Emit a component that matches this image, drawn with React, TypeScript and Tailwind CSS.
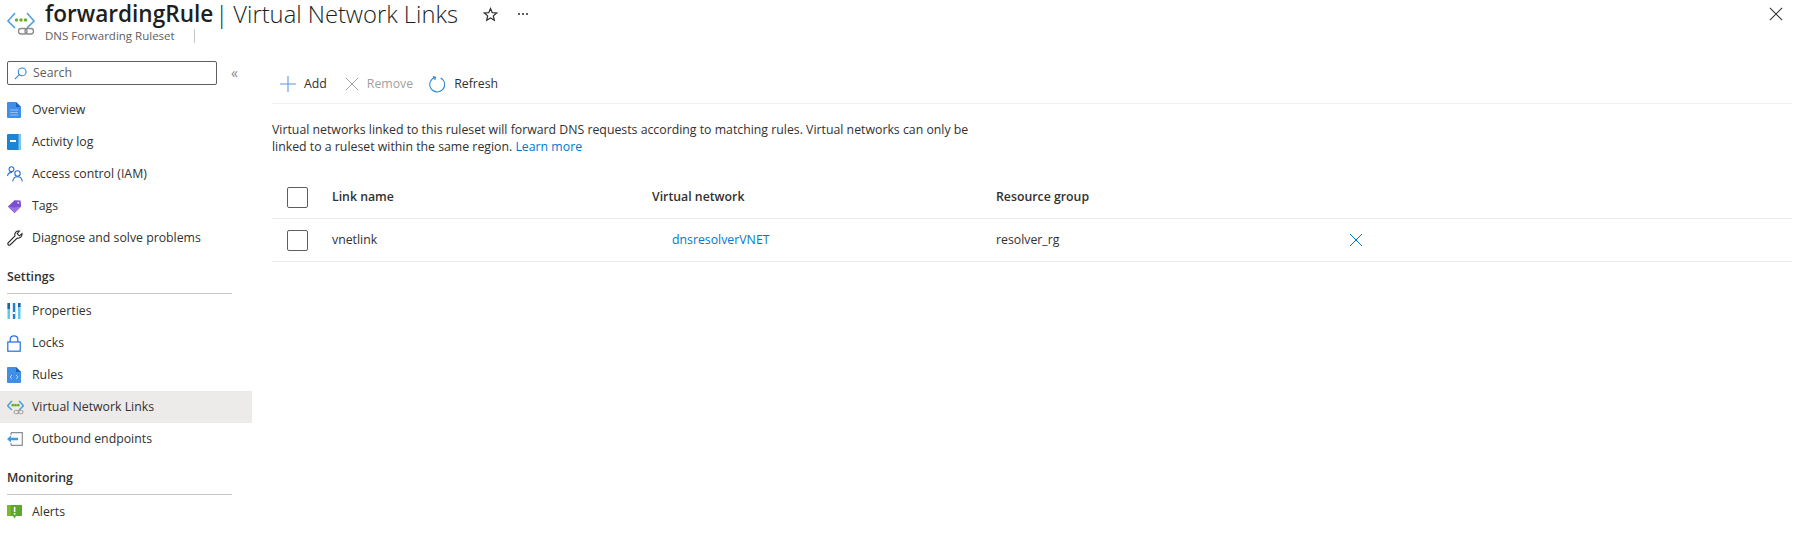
import type { ReactNode } from "react";

function LinkGlyph({ small }: { small?: boolean }) {
  const arrow = small ? "2.6" : "1.6";
  const dot = small ? 2.2 : 1.7;
  return (
    <svg viewBox="0 0 28 26" className={small ? "w-[17px] h-[16px]" : "w-[28px] h-[26px]"}>
      <path d="M8 3 L1 11 L8 18" fill="none" stroke="#50a0e0" strokeWidth={arrow} />
      <path d="M20 3 L27 11 L20 18" fill="none" stroke="#50a0e0" strokeWidth={arrow} />
      <circle cx="9.5" cy="10" r={dot} fill="#6bb024" />
      <circle cx="14" cy="10" r={dot} fill="#6bb024" />
      <circle cx="18.5" cy="10" r={dot} fill="#6bb024" />
      <rect x="11.5" y="18.5" width="8.5" height="5.5" rx="2.7" fill="none" stroke="#8a8a8a" strokeWidth="1.3" />
      <rect x="18" y="18.5" width="8.5" height="5.5" rx="2.7" fill="none" stroke="#8a8a8a" strokeWidth="1.3" />
    </svg>
  );
}

function DocIcon({ code }: { code?: boolean }) {
  return (
    <svg viewBox="0 0 14 16" className="w-[14px] h-[16px]">
      <path d="M0 1 a1 1 0 0 1 1-1 H9 L14 5 V15 a1 1 0 0 1-1 1 H1 a1 1 0 0 1-1-1 Z" fill="#3f8ee8" />
      <path d="M9 0 L14 5 H9 Z" fill="#1b62c4" />
      {code ? (
        <path d="M5 8 L3 10 L5 12 M9 8 L11 10 L9 12" fill="none" stroke="#cfe3fa" strokeWidth="0.8" />
      ) : (
        <path d="M3 8 H11 M3 10.5 H11 M3 13 H11" stroke="#8fc0f5" strokeWidth="1" />
      )}
    </svg>
  );
}

function ActivityIcon() {
  return (
    <svg viewBox="0 0 14 16" className="w-[14px] h-[16px]">
      <rect width="14" height="16" rx="1" fill="#1d84d2" />
      <rect x="11.5" width="2.5" height="16" fill="#7cc4f0" />
      <rect x="3" y="6" width="6" height="2" fill="#fff" />
    </svg>
  );
}

function AccessIcon() {
  return (
    <svg viewBox="0 0 16 16" className="w-[16px] h-[16px]" fill="none" stroke="#2b6fd6" strokeWidth="1.1">
      <circle cx="4.5" cy="3.2" r="2.4" />
      <path d="M0.6 10 C0.8 7.5 2.5 6.4 5 6.4" />
      <circle cx="10.5" cy="7.5" r="2.7" />
      <path d="M5.8 15.5 C6 12.2 8 10.8 10.5 10.8 C13 10.8 15 12.2 15.3 15.5" />
    </svg>
  );
}

function TagIcon() {
  return (
    <svg viewBox="0 0 16 16" className="w-[15px] h-[15px]">
      <path d="M1 8 L8 1.2 L14.5 1.5 Q15 7 15 8 L8 15 Z" fill="#7a4fd0" />
      <path d="M8 15 L1 8 L8 9 L15 8 Z" fill="#9a72e4" />
      <circle cx="12" cy="4" r="1" fill="#e8dcfa" />
    </svg>
  );
}

function WrenchIcon() {
  return (
    <svg viewBox="0 0 16 16" className="w-[16px] h-[16px]" fill="none" stroke="#2a2a2a" strokeWidth="1.1">
      <path d="M1 13 L8 5.8 C7.2 3 9.4 0.6 12.4 1 L10.2 3.6 L12.4 5.8 L15 3.5 C15.4 6.6 13 8.8 10.2 8 L3 15 C2 15.8 0.2 14.2 1 13 Z" />
    </svg>
  );
}

function PropertiesIcon() {
  return (
    <svg viewBox="0 0 14 16" className="w-[14px] h-[16px]">
      <rect x="0.5" width="2.5" height="16" fill="#5ec8f2" />
      <rect x="0.5" width="2.5" height="6" fill="#1c5fb5" />
      <rect x="5.8" width="2.5" height="16" fill="#1d84d2" />
      <rect x="5.8" y="9" width="2.5" height="2" fill="#fff" />
      <rect x="11" width="2.5" height="16" fill="#5ec8f2" />
      <rect x="11" width="2.5" height="4" fill="#1c5fb5" />
    </svg>
  );
}

function LockIcon() {
  return (
    <svg viewBox="0 0 14 17" className="w-[14px] h-[17px]" fill="none" stroke="#1f6fe0" strokeWidth="1.2">
      <rect x="0.8" y="7" width="12.4" height="9.2" />
      <path d="M3.2 7 V4.4 C3.2 2.2 4.8 0.8 7 0.8 C9.2 0.8 10.8 2.2 10.8 4.4 V7" />
    </svg>
  );
}

function OutboundIcon() {
  return (
    <svg viewBox="0 0 16 14" className="w-[16px] h-[14px]">
      <path d="M4 0.7 H15.3 V13.3 H4 M4 0.7 V3 M4 11 V13.3" fill="none" stroke="#8a8f94" strokeWidth="1.2" />
      <path d="M0 7 L4 3.5 V5.8 H11 V8.2 H4 V10.5 Z" fill="#3d9be0" />
    </svg>
  );
}

function AlertIcon() {
  return (
    <svg viewBox="0 0 15 14" className="w-[15px] h-[14px]">
      <path d="M0 0 H15 V11 H9 L7.5 13.5 L6 11 H0 Z" fill="#5ea72e" />
      <rect x="0" width="4" height="11" fill="#7cb82f" />
      <rect x="6.8" y="2" width="1.6" height="5" fill="#fff" />
      <rect x="6.8" y="8" width="1.6" height="1.6" fill="#fff" />
    </svg>
  );
}

function NavItem({ icon, label, active }: { icon: ReactNode; label: string; active?: boolean }) {
  return (
    <div className={`flex h-[32px] items-center pl-[7px] ${active ? "bg-[#edebe9]" : ""}`}>
      <div className="flex w-[25px] shrink-0 items-center">{icon}</div>
      <span className="text-[12.3px] text-[#323130]">{label}</span>
    </div>
  );
}

function SectionTitle({ label }: { label: string }) {
  return (
    <div className="mb-px ml-[7px] mr-[20px] flex h-[40px] items-center border-b border-[#c8c6c4] pt-[7px] text-[12.3px] font-semibold text-[#323130]">
      {label}
    </div>
  );
}

function Checkbox() {
  return <div className="h-[21px] w-[21px] rounded-[2px] border border-[#605e5c] bg-white" />;
}

export default function App() {
  return (
    <div className="relative h-[554px] w-[1808px] overflow-hidden bg-white font-['Open_Sans','Noto_Sans',sans-serif]">
      <header className="flex h-[50px] pl-[7px]">
        <div className="mt-[10px] w-[38px] shrink-0">
          <LinkGlyph />
        </div>
        <div>
          <div className="flex items-center">
            <h1 className="flex items-center leading-[28px] text-[#201f1e]">
              <span className="text-[22.6px] font-semibold">forwardingRule</span>
              <span className="w-[20px] pr-[3px] text-center text-[24px] font-light">|</span>
              <span className="text-[23.75px] font-light">Virtual Network Links</span>
            </h1>
            <svg viewBox="0 0 24 24" className="ml-[25px] h-[15px] w-[15px]" fill="none" stroke="#323130" strokeWidth="2">
              <path d="M12 2.5 L14.8 9 L21.8 9.6 L16.5 14.2 L18.1 21.2 L12 17.5 L5.9 21.2 L7.5 14.2 L2.2 9.6 L9.2 9 Z" />
            </svg>
            <div className="ml-[20px] flex gap-[2px]">
              <span className="h-[2px] w-[2px] bg-[#605e5c]" />
              <span className="h-[2px] w-[2px] bg-[#605e5c]" />
              <span className="h-[2px] w-[2px] bg-[#605e5c]" />
            </div>
          </div>
          <div className="flex items-center">
            <span className="text-[11.5px] leading-[16px] text-[#605e5c]">DNS Forwarding Ruleset</span>
            <span className="ml-[19px] h-[14px] w-px bg-[#c8c6c4]" />
          </div>
        </div>
      </header>
      <svg viewBox="0 0 16 16" className="absolute right-[25px] top-[7px] h-[14px] w-[14px]" fill="none" stroke="#323130" strokeWidth="1.2">
        <path d="M1 1 L15 15 M15 1 L1 15" />
      </svg>

      <div className="flex">
        <aside className="w-[252px] shrink-0 pt-[11px]">
          <div className="flex items-center pb-[9px]">
            <div className="ml-[7px] flex h-[24px] w-[210px] items-center rounded-[2px] border border-[#605e5c] pl-[6px]">
              <svg viewBox="0 0 16 16" className="h-[13px] w-[13px]" fill="none" stroke="#2b88d8" strokeWidth="1.3">
                <circle cx="10" cy="6" r="4.8" />
                <path d="M6.5 9.5 L1 15" />
              </svg>
              <span className="ml-[6px] text-[12.3px] text-[#605e5c]">Search</span>
            </div>
            <span className="ml-[14px] text-[14px] leading-none text-[#8a8886]">«</span>
          </div>
          <NavItem icon={<DocIcon />} label="Overview" />
          <NavItem icon={<ActivityIcon />} label="Activity log" />
          <NavItem icon={<AccessIcon />} label="Access control (IAM)" />
          <NavItem icon={<TagIcon />} label="Tags" />
          <NavItem icon={<WrenchIcon />} label="Diagnose and solve problems" />
          <SectionTitle label="Settings" />
          <NavItem icon={<PropertiesIcon />} label="Properties" />
          <NavItem icon={<LockIcon />} label="Locks" />
          <NavItem icon={<DocIcon code />} label="Rules" />
          <NavItem icon={<LinkGlyph small />} label="Virtual Network Links" active />
          <NavItem icon={<OutboundIcon />} label="Outbound endpoints" />
          <SectionTitle label="Monitoring" />
          <NavItem icon={<AlertIcon />} label="Alerts" />
        </aside>

        <main className="ml-[20px] mr-[16px] flex-1 pt-[15px]">
          <div className="flex h-[39px] items-center border-b border-[#f3f2f1] pl-[8px] text-[12.3px]">
            <svg viewBox="0 0 16 16" className="h-[16px] w-[16px]" fill="none" stroke="#5a9be0" strokeWidth="1.1">
              <path d="M0 8 H16 M8 0 V16" />
            </svg>
            <span className="ml-[8px] text-[#323130]">Add</span>
            <svg viewBox="0 0 16 16" className="ml-[18px] h-[14px] w-[14px]" fill="none" stroke="#a19f9d" strokeWidth="1.1">
              <path d="M1 1 L15 15 M15 1 L1 15" />
            </svg>
            <span className="ml-[8px] text-[#a19f9d]">Remove</span>
            <svg viewBox="0 0 16 16" className="ml-[16px] h-[17px] w-[17px]" fill="none" stroke="#2b88d8" strokeWidth="1">
              <path d="M6 1.2 A7 7 0 1 0 11 1.8 M3.6 0.6 L6.2 1.2 L5.4 3.8" />
            </svg>
            <span className="ml-[8px] text-[#323130]">Refresh</span>
          </div>

          <p className="mt-[17px] w-[720px] text-[12.3px] leading-[17px] text-[#323130]">
            Virtual networks linked to this ruleset will forward DNS requests according to matching rules. Virtual networks can only be linked to a ruleset within the same region.{" "}
            <span className="text-[#0078d4]">Learn more</span>
          </p>

          <div className="mt-[21px] flex h-[43px] items-center border-b border-[#edebe9] text-[12.3px] font-semibold text-[#323130]">
            <div className="w-[60px] pl-[15px]"><Checkbox /></div>
            <div className="w-[320px]">Link name</div>
            <div className="w-[344px]">Virtual network</div>
            <div>Resource group</div>
          </div>
          <div className="flex h-[43px] items-center border-b border-[#edebe9] text-[12.3px] text-[#323130]">
            <div className="w-[60px] pl-[15px]"><Checkbox /></div>
            <div className="w-[320px]">vnetlink</div>
            <div className="w-[344px] pl-[20px] text-[#0078d4]">dnsresolverVNET</div>
            <div className="w-[353px]">resolver_rg</div>
            <svg viewBox="0 0 14 14" className="h-[14px] w-[14px]" fill="none" stroke="#0078d4" strokeWidth="1">
              <path d="M1 1 L13 13 M13 1 L1 13" />
            </svg>
          </div>
        </main>
      </div>
    </div>
  );
}
